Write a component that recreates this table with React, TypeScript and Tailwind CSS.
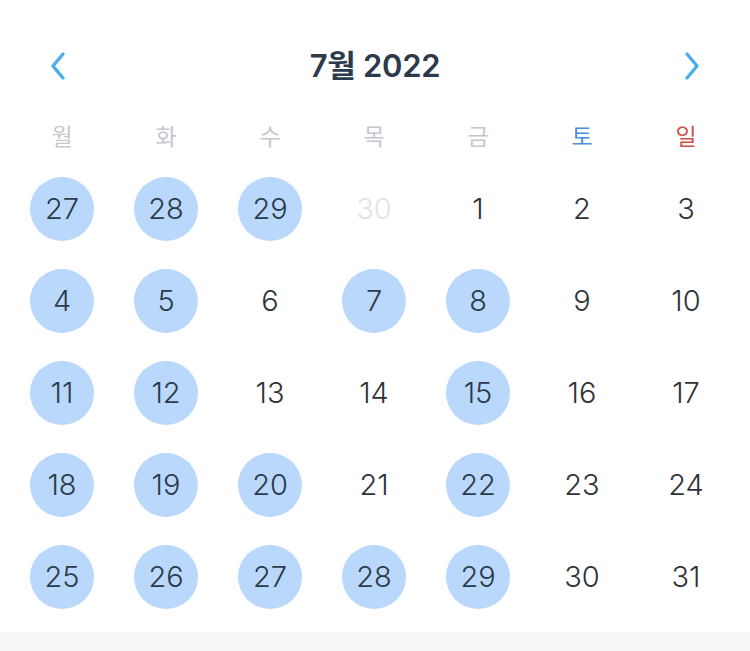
import React from "react";

type Day = { n: number; muted?: boolean; marked?: boolean };

const weekdays = [
  { label: "월", color: "text-[#c3c7cf]" },
  { label: "화", color: "text-[#c3c7cf]" },
  { label: "수", color: "text-[#c3c7cf]" },
  { label: "목", color: "text-[#c3c7cf]" },
  { label: "금", color: "text-[#c3c7cf]" },
  { label: "토", color: "text-[#4a8fdb]" },
  { label: "일", color: "text-[#d2504c]" },
];

const marked = new Set([4, 5, 7, 8, 11, 12, 15, 18, 19, 20, 22, 25, 26, 27, 28, 29]);

// june tail + july
const days: Day[] = [
  { n: 27, muted: false, marked: true },
  { n: 28, muted: false, marked: true },
  { n: 29, muted: false, marked: true },
  { n: 30, muted: true },
  ...Array.from({ length: 31 }, (_, i) => ({ n: i + 1, marked: marked.has(i + 1) })),
];

const Chevron = ({ dir }: { dir: "left" | "right" }) => (
  <svg width="18" height="30" viewBox="0 0 18 30" fill="none">
    <path
      d={dir === "left" ? "M14 3 L4 15 L14 27" : "M4 3 L14 15 L4 27"}
      stroke="#4aafe6"
      strokeWidth="3.4"
      strokeLinecap="round"
      strokeLinejoin="round"
    />
  </svg>
);

export default function App() {
  return (
    <div
      className="w-[750px] h-[651px] bg-white flex flex-col"
      style={{ fontFamily: "Inter, 'Noto Sans CJK KR', sans-serif" }}
    >
      {/* header */}
      <div className="h-[64px] mt-[34px] flex items-center justify-between px-[49px]">
        <Chevron dir="left" />
        <div className="text-[31px] font-semibold text-[#2c3a4b] tracking-[-0.3px]">7월 2022</div>
        <Chevron dir="right" />
      </div>

      {/* weekday row */}
      <div className="grid grid-cols-7 pl-[10px] pr-[12px] mt-[8px] h-[62px] items-center">
        {weekdays.map((w) => (
          <div key={w.label} className={`text-center text-[23px] ${w.color}`}>
            {w.label}
          </div>
        ))}
      </div>

      {/* days */}
      <div className="grid grid-cols-7 pl-[10px] pr-[12px] mt-[9px] gap-y-[28px]">
        {days.map((d, i) => (
          <div key={i} className="flex justify-center">
            <div
              className={`w-[64px] h-[64px] rounded-full flex items-center justify-center text-[29px] font-light ${
                d.marked ? "bg-[#b9d8fb] text-[#2c3a4b]" : d.muted ? "text-[#e1e3e7]" : "text-[#2f3338]"
              }`}
            >
              {d.n}
            </div>
          </div>
        ))}
      </div>

      <div className="flex-1" />
      <div className="h-[19px] bg-[#f6f6f6]" />
    </div>
  );
}
